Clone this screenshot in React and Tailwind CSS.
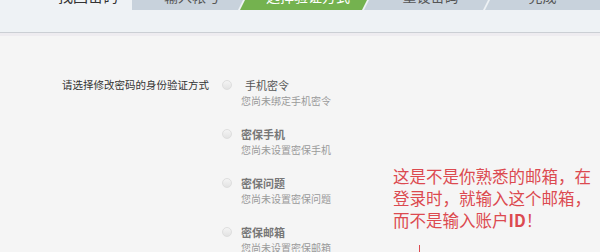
import React from "react";

const options = [
  { title: "手机密令", desc: "您尚未绑定手机密令", first: true },
  { title: "密保手机", desc: "您尚未设置密保手机" },
  { title: "密保问题", desc: "您尚未设置密保问题" },
  { title: "密保邮箱", desc: "您尚未设置密保邮箱" },
];

const tabShape = "[clip-path:polygon(14px_0,100%_0,calc(100%-14px)_100%,0_100%)]";

const App = () => {
  return (
    <div
      className="w-[600px] h-[252px] overflow-hidden bg-[#f5f5f5] relative"
      style={{ fontFamily: '"Noto Sans CJK SC", "Microsoft YaHei", sans-serif' }}
    >
      {/* step bar, scrolled so only its lower part shows */}
      <div className="-mt-[18px] h-[51px] bg-[#eef2f5] border-b border-[#cbcfd4]">
        <div className="flex h-[28px] text-[14px] leading-[28px]">
          <div className="w-[132px] pl-[58px] text-[#333] text-[15px]">找回密码</div>
          <div className="w-[120px] bg-[#c8d2dc] text-[#555] text-center [clip-path:polygon(0_0,100%_0,calc(100%-14px)_100%,0_100%)]">
            输入帐号
          </div>
          <div className={`w-[136px] -ml-[12px] bg-[#74b24f] text-white text-center ${tabShape}`}>
            选择验证方式
          </div>
          <div className={`w-[133px] -ml-[12px] bg-[#c8d2dc] text-[#555] text-center ${tabShape}`}>
            重设密码
          </div>
          <div className="flex-1 -ml-[12px] bg-[#c8d2dc] text-[#555] text-center [clip-path:polygon(14px_0,100%_0,100%_100%,0_100%)]">
            完成
          </div>
        </div>
      </div>
      <div className="h-[3px] bg-[#eeecf0]"></div>

      <div className="flex pt-[41px] pl-[62px]">
        <div className="w-[160px] text-[10.5px] leading-[16px] text-[#333]">请选择修改密码的身份验证方式</div>
        <div className="flex flex-col gap-[17px]">
          {options.map((o) => (
            <div key={o.title} className="flex">
              <div className="h-[16px] flex items-center">
                <span className="block w-[10px] h-[10px] rounded-full border border-[#dedede] bg-gradient-to-b from-[#f4f4f4] to-[#e3e3e3]"></span>
              </div>
              <div className="ml-[9px]">
                <div
                  className={`text-[11px] leading-[16px] ${
                    o.first ? "ml-[4px] text-[#555]" : "font-bold text-[#777]"
                  }`}
                >
                  {o.title}
                </div>
                <div className="text-[10px] leading-[16px] text-[#9a9a9a]">{o.desc}</div>
              </div>
            </div>
          ))}
        </div>
      </div>

      {/* red annotation */}
      <div className="absolute left-[393px] top-[165px] text-[16.5px] leading-[22px] text-[#dc4a50] whitespace-nowrap">
        这是不是你熟悉的邮箱，在
        <br />
        登录时，就输入这个邮箱，
        <br />
        而不是输入账户<span className="font-bold">ID</span>！
      </div>
      <span className="absolute left-[419px] top-[245px] w-[1px] h-[7px] bg-[#dc4a50]"></span>
    </div>
  );
};

export default App;
